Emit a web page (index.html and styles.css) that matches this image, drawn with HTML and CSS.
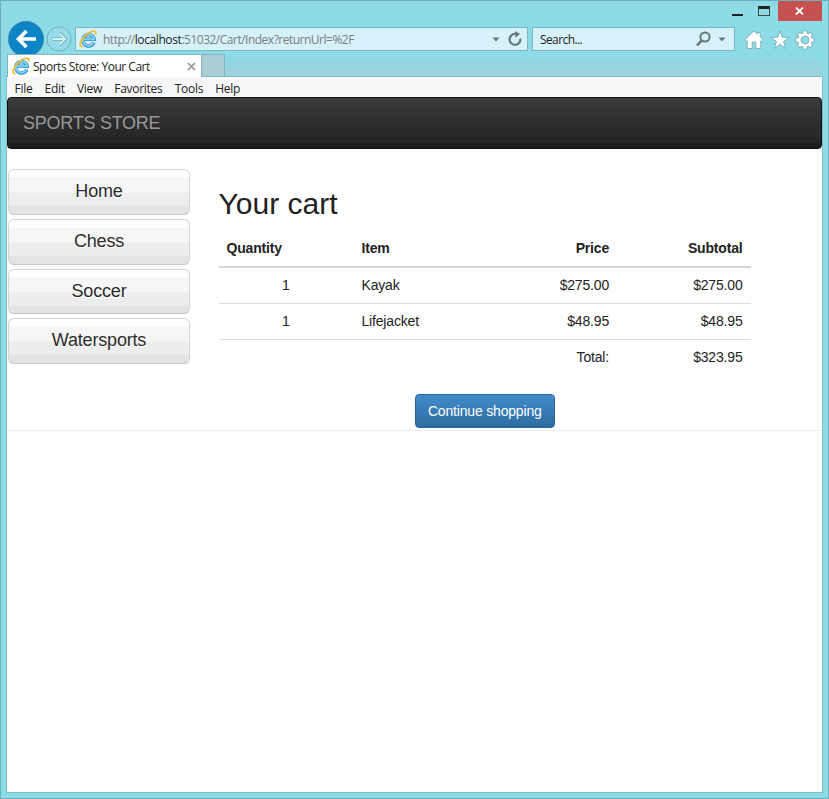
FILE: index.html
```html
<!DOCTYPE html>
<html lang="en">
<head>
<meta charset="utf-8">
<title>Sports Store: Your Cart</title>
<link rel="stylesheet" href="styles.css">
</head>
<body>
<svg class="defs" width="0" height="0">
  <defs>
    <symbol id="ie" viewBox="0 0 18 18">
      <path d="M14.900 12.300a5.700 5.700 0 1 1 .3-3H5.500" fill="none" stroke="#3b93cc" stroke-width="3.500"/>
      <path d="M14.700 12.100a5.700 5.700 0 1 1 .4-2.800H5" fill="none" stroke="#7dd0f5" stroke-width="2"/>
      <path d="M3.600 16.600C.5 17 .2 13.800 3.200 9.400 7.300 3.500 14.300-.4 16.300 1.700c.8.800.6 1.900.1 3" fill="none" stroke="#f5bd2b" stroke-width="1.700"/>
    </symbol>
  </defs>
</svg>
<div class="window">
  <header class="titlebar">
    <div class="min"><i></i></div>
    <div class="max"><i></i></div>
    <div class="close"><svg width="9" height="8" viewBox="0 0 9 8"><path d="M1 .5l7 7M8 .5l-7 7" stroke="#fff" stroke-width="1.800"/></svg></div>
  </header>
  <div class="toolbar">
    <svg class="back" width="36" height="36" viewBox="0 0 36 36"><circle cx="18" cy="18" r="17.700" fill="#0d84c6" stroke="#3d87aa" stroke-width=".6"/><path d="M28 18H10.500M18.500 10L10.500 18l8 8" fill="none" stroke="#fff" stroke-width="3.600"/></svg>
    <svg class="forward" width="26" height="26" viewBox="0 0 26 26"><circle cx="13" cy="13" r="12" fill="#98dce9" stroke="#6eafbd"/><path d="M6 13h13M13.500 7l6 6-6 6" fill="none" stroke="#72b0be" stroke-width="3.400"/><path d="M6.500 13h12M13.500 7.500l5.500 5.500-5.500 5.500" fill="none" stroke="#d4f1f7" stroke-width="1.900"/></svg>
    <div class="address">
      <svg class="logo" width="18" height="18"><use href="#ie"/></svg>
      <span class="url">http://<b>localhost</b>:51032/Cart/Index?returnUrl=%2F</span>
      <svg class="caret" width="8" height="5" viewBox="0 0 8 5"><path d="M.5.5h7L4 4.500z" fill="#66787c"/></svg>
      <svg class="reload" width="14" height="15" viewBox="0 0 14 15"><path d="M12.300 7.500A5.400 5.400 0 1 1 7.500 3" fill="none" stroke="#66787c" stroke-width="2.200"/><path d="M7 0l5 3-4.500 3.700z" fill="#66787c"/></svg>
    </div>
    <div class="search">
      <span>Search...</span>
      <svg class="glass" width="15" height="16" viewBox="0 0 15 16"><circle cx="9" cy="6" r="4.600" fill="none" stroke="#66787c" stroke-width="2"/><path d="M5.700 9.300L1 14.500" stroke="#66787c" stroke-width="2.600"/></svg>
      <svg class="caret2" width="8" height="5" viewBox="0 0 8 5"><path d="M.5.5h7L4 4.500z" fill="#66787c"/></svg>
    </div>
    <svg class="home" width="20" height="20" viewBox="0 0 20 20"><path d="M10 1L.800 9.800l1.500 1.700.900-.7V18.500h5v-6.300h3.600v6.300h5v-7.700l.900.7 1.500-1.700-3-2.900V2.500h-2.600v1.700z" fill="#fff" stroke="#77a9b5" stroke-width=".9"/></svg>
    <svg class="star" width="20" height="20" viewBox="0 0 20 20"><path d="M10 .8l2.200 6.500h7l-5.600 4.200 2.100 7L10 14.300l-5.700 4.200 2.100-7L.800 7.300h7z" fill="#fff" stroke="#77a9b5" stroke-width=".9"/></svg>
    <svg class="gear" width="20" height="20" viewBox="0 0 20 20">
      <g stroke="#77a9b5" stroke-width="4.800"><path d="M10 .5v19M.500 10h19M3.300 3.300l13.400 13.400M16.700 3.300L3.300 16.700"/></g>
      <circle cx="10" cy="10" r="7.400" fill="#77a9b5"/>
      <g stroke="#fff" stroke-width="3.300"><path d="M10 1.200v17.600M1.200 10h17.600M3.800 3.800l12.400 12.400M16.200 3.800L3.800 16.200"/></g>
      <circle cx="10" cy="10" r="6.700" fill="#fff"/><circle cx="10" cy="10" r="4" fill="#8edbe8" stroke="#77a9b5" stroke-width=".9"/>
    </svg>
  </div>
  <div class="tabs">
    <div class="tab"><svg width="18" height="18"><use href="#ie"/></svg><span>Sports Store: Your Cart</span><svg class="x" width="9" height="9" viewBox="0 0 9 9"><path d="M1 1l7 7M8 1L1 8" stroke="#949494" stroke-width="1.700"/></svg></div>
    <div class="newtab"></div>
  </div>
  <div class="client">
    <nav class="menu"><span>File</span><span>Edit</span><span>View</span><span>Favorites</span><span>Tools</span><span>Help</span></nav>
    <div class="navbar">SPORTS STORE</div>
    <div class="content">
      <aside class="categories"><a>Home</a><a>Chess</a><a>Soccer</a><a>Watersports</a></aside>
      <main>
        <h2>Your cart</h2>
        <table>
          <thead><tr><th class="q">Quantity</th><th class="i">Item</th><th class="p num">Price</th><th class="num">Subtotal</th></tr></thead>
          <tbody>
            <tr><td class="count">1</td><td>Kayak</td><td class="num">$275.00</td><td class="num">$275.00</td></tr>
            <tr><td class="count">1</td><td>Lifejacket</td><td class="num">$48.95</td><td class="num">$48.95</td></tr>
            <tr><td colspan="3" class="num">Total:</td><td class="num">$323.95</td></tr>
          </tbody>
        </table>
        <div class="actions"><a class="btn">Continue shopping</a></div>
      </main>
    </div>
  </div>
</div>
</body>
</html>
```
FILE: styles.css
```css
* { box-sizing: border-box; }
body { margin: 0; }
svg { display: block; flex: none; }
.defs { position: absolute; }
.window {
  width: 829px; height: 799px; padding: 0 6px;
  display: flex; flex-direction: column;
  background: #8edbe8; border: 1px solid #6eafbd;
  font: 12px "Open Sans", sans-serif; color: #222;
}
.titlebar { height: 20px; flex: none; display: flex; justify-content: flex-end; }
.min { width: 31px; margin-right: -6px; padding: 12px 0 0 9px; }
.min i { display: block; width: 11px; height: 2px; margin-top: 1px; background: #222; }
.max { width: 30px; padding: 5px 0 0 10px; }
.max i { display: block; width: 12px; height: 10px; border: 1px solid #444; border-top: 3px solid #222; }
.close { width: 44px; padding-right: 1px; background: #c75050; display: flex; align-items: center; justify-content: center; }
.toolbar { height: 33px; flex: none; display: flex; align-items: flex-start; padding-left: 1px; }
.forward { margin: 5px 0 0 2px; }
.address, .search { height: 24px; margin-top: 6px; background: #d6f1f7; border: 1px solid #79b5c3; display: flex; align-items: center; }
.address { width: 453px; margin-left: 3px; padding-left: 3px; }
.url { margin-left: 6px; color: #768083; letter-spacing: -0.5px; white-space: nowrap; }
.url b { font-weight: 400; color: #222; letter-spacing: -0.4px; }
.caret { margin-left: auto; }
.reload { margin: 0 5px 2px 8px; }
.search { width: 203px; margin-left: 4px; padding-left: 7px; }
.search span { letter-spacing: -0.6px; }
.glass { margin-left: auto; }
.caret2 { margin: 0 8px 0 7px; }
.home { margin: 9px 0 0 9px; }
.star { margin: 9px 0 0 6px; }
.gear { margin: 9px 0 0 5px; }
.tabs { height: 23px; flex: none; display: flex; position: relative; z-index: 1; background: linear-gradient(#8edbe8 5px, #93d5e1 6px, #93d5e1 13px, #9dd3de 14px); border-bottom: 1px solid #7fbdca; }
.tab { width: 195px; margin-bottom: -1px; background: #fff; border: 1px solid #7fb6c2; border-bottom: 0; display: flex; align-items: center; padding-left: 4px; letter-spacing: -0.48px; }
.tab span { margin-left: 3px; white-space: nowrap; }
.x { margin: 0 5px 0 auto; }
.newtab { width: 23px; background: #abcdd3; border: 1px solid #7fb6c2; border-width: 1px 1px 0 0; }
.client { flex: 1; min-height: 0; margin-bottom: 6px; background: #fff; box-shadow: 0 0 0 1px #7fbdca; }
.menu { height: 20px; background: #f7f7f7; display: flex; align-items: center; gap: 12.2px; padding: 2px 0 0 7.5px; letter-spacing: -0.28px; }
.navbar {
  height: 52px; padding-left: 15px;
  border: 1px solid #111; border-radius: 4px;
  background: linear-gradient(#3a3a3a 0, #383838 10px, #333 11px, #333 18px, #2b2b2b 27px, #262626 44px, #1c1c1c 46px);
  color: #999; font: 18px/50px "Liberation Sans", sans-serif; letter-spacing: -0.25px;
}
.content { display: flex; height: 282px; padding: 20px 0 0 1px; border-bottom: 1px solid #eee; font: 14px/19.4px "Liberation Sans", sans-serif; letter-spacing: -0.18px; color: #222; }
.categories { width: 182px; display: flex; flex-direction: column; gap: 4px; }
.categories a {
  height: 45.8px; border: 1px solid #d5d5d5; border-bottom-color: #c8c8c8; border-radius: 6px;
  background: linear-gradient(#fff 0, #fff 7px, #f6f6f6 8px, #f6f6f6 22px, #eceeed 23px, #eceeed 35px, #e3e3e3 36px);
  text-align: center; font-size: 18px; line-height: 43px; color: #2c2c2c; text-shadow: 0 1px 0 #fff;
}
main { margin-left: 28.5px; width: 532.5px; }
h2 { margin: 19px 0 9px; font-size: 30px; font-weight: 400; line-height: 32px; height: 32px; letter-spacing: 0; }
table { width: 532px; border-collapse: collapse; table-layout: fixed; }
th, td { padding: 8px; text-align: left; height: 36px; border-top: 1px solid #ddd; line-height: 19px; }
th { border-top: 0; border-bottom: 2px solid #d5d5d5; height: 38px; padding: 9px 8px 7px; }
.q { width: 135px; }
.i { width: 137px; }
.p { width: 126.5px; }
.num { text-align: right; }
.count { text-align: right; padding-right: 64px; }
.actions { text-align: center; margin-top: 18px; }
.btn { display: inline-block; width: 140px; height: 34px; line-height: 32px; color: #fff; border: 1px solid #2b669a; border-radius: 4px; background: linear-gradient(#428bca, #2d6ca2); }
```
